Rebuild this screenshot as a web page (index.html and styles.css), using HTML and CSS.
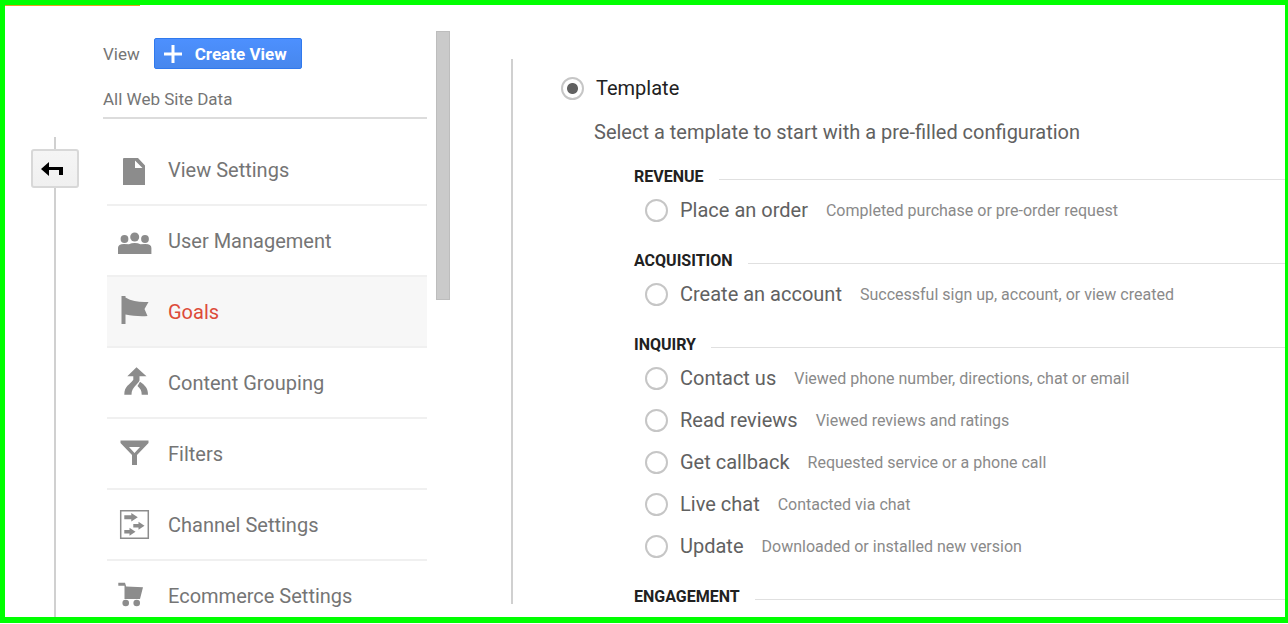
FILE: index.html
```html
<!DOCTYPE html>
<html lang="en">
<head>
  <meta charset="UTF-8">
  <title>Goals</title>
  <meta name="viewport" content="width=device-width, initial-scale=1" />
  <link rel="stylesheet" href="styles.css">
</head>
<body>

  <div class="frame">

    <div class="rail">
      <button class="back" type="button" aria-label="Back">
        <svg width="24" height="16" viewBox="0 0 24 16"><path d="M0 8l8-7v5h14v8h-4V9H8v6z" /></svg>
      </button>
    </div>

    <aside class="views">
      <div class="views-head">
        <span>View</span>
        <button class="create" type="button">
          <svg width="18" height="18" viewBox="0 0 18 18"><path d="M7.500 0h3v7.500h7.500v3h-7.500V18h-3v-7.500H0v-3h7.500z" /></svg>
          Create View
        </button>
      </div>
      <div class="property">All Web Site Data</div>

      <nav class="menu">
        <a href="#">
          <svg class="icon" viewBox="0 0 36 36"><path fill-rule="evenodd" d="M8 6h14l7 7.500V33H7V7q0-1 1-1zM19 8.500V16h7.500z" /></svg>
          View Settings
        </a>
        <a href="#">
          <svg class="icon" viewBox="0 0 36 36">
            <circle cx="18.700" cy="14" r="4.500" /><circle cx="8.500" cy="16" r="3.900" /><circle cx="29" cy="16" r="3.900" />
            <path d="M2 31v-6q0-4 6-4 3 0 5 .3 2.500-1.300 5.700-1.300t5.700 1.300q2-.3 5-.3 6 0 6 4v6z" />
          </svg>
          User Management
        </a>
        <a href="#" class="active">
          <svg class="icon" viewBox="0 0 36 36"><path d="M5.500 2h4v1.500c7 4 14 5 23 4.500l-4 7 3 7c-7 .5-15 0-22-1.500V30h-4z" /></svg>
          Goals
        </a>
        <a href="#">
          <svg class="icon" viewBox="0 0 36 36">
            <path d="M20.500 2.300l10 9h-7v4.200c-1.500 4-8 6.500-8 14.200H8.300c0-9 5.500-9.700 9-15v-3.400h-6z" />
            <path d="M24 16.800c5 3.700 8 6 8 12.900h-6.300c0-4-1.200-6-4.200-8.700z" />
          </svg>
          Content Grouping
        </a>
        <a href="#">
          <svg class="icon" viewBox="0 0 36 36"><path fill-rule="evenodd" d="M4.500 4.500h28V7L21 19v10h-5V19L4.500 7zM13 11l5.500 6 5.500-6z" /></svg>
          Filters
        </a>
        <a href="#">
          <svg class="icon" viewBox="0 0 36 36">
            <path fill="none" stroke="#8c8c8c" stroke-width="1.500" d="M4.700 3.700h27.600v27.600H4.700z" />
            <path d="M8.300 8.300h7V6l6.500 4.300-6.500 4.300v-2.300h-7zM17.300 17h5.200v-2.300l6 4-6 4v-2.300h-5.200zM8.300 23h5.200v-2.300l6 4-6 4v-2.300H8.300z" />
          </svg>
          Channel Settings
        </a>
        <a href="#">
          <svg class="icon" viewBox="0 0 36 36">
            <path d="M2.300 4.800H9l1.200 3.700L27 9.300 24 21H8.500V7.800H2.300z" />
            <circle cx="9.700" cy="25" r="3.300" /><circle cx="20.700" cy="25" r="3.300" />
          </svg>
          Ecommerce Settings
        </a>
      </nav>
    </aside>

    <div class="scroll-thumb"></div>

    <main class="goal">
      <label class="template"><input type="radio" name="type" checked> Template</label>
      <p>Select a template to start with a pre-filled configuration</p>

      <section>
        <h3>REVENUE</h3>
        <label><input type="radio" name="goal"> Place an order <small>Completed purchase or pre-order request</small></label>
      </section>

      <section>
        <h3>ACQUISITION</h3>
        <label><input type="radio" name="goal"> Create an account <small>Successful sign up, account, or view created</small></label>
      </section>

      <section>
        <h3>INQUIRY</h3>
        <label><input type="radio" name="goal"> Contact us <small>Viewed phone number, directions, chat or email</small></label>
        <label><input type="radio" name="goal"> Read reviews <small>Viewed reviews and ratings</small></label>
        <label><input type="radio" name="goal"> Get callback <small>Requested service or a phone call</small></label>
        <label><input type="radio" name="goal"> Live chat <small>Contacted via chat</small></label>
        <label><input type="radio" name="goal"> Update <small>Downloaded or installed new version</small></label>
      </section>

      <section>
        <h3>ENGAGEMENT</h3>
      </section>
    </main>

  </div>

</body>
</html>
```

FILE: styles.css
```css
body {
  margin: 0;
  background-color: #fff;
  font-family: Roboto, "Liberation Sans", sans-serif;
  color: #757575;
}
*, *:before, *:after {
  box-sizing: border-box;
}

.frame {
  position: relative;
  display: flex;
  height: calc(100vh - 1px);
  border: 5px solid #00ff00;
  border-right-width: 3px;
  border-bottom-width: 6px;
  overflow: hidden;
}
.frame:before {
  content: '';
  position: absolute;
  top: 0;
  left: 0;
  width: 135px;
  height: 1px;
  background-color: #e8a020;
}

/* left rail with the back button */
.rail {
  flex: none;
  display: flex;
  flex-direction: column;
  align-items: center;
  width: 48px;
  margin: 132px 24px 0 26px;
}
.rail:before, .rail:after {
  content: '';
  width: 2px;
  height: 12px;
  background-color: #d0d0d0;
}
.rail:after {
  flex: 1;
}
.back {
  display: flex;
  align-items: center;
  justify-content: center;
  width: 48px;
  height: 39px;
  padding: 0 4px 0 0;
  border: 2px solid #d8d8d8;
  border-radius: 3px;
  background: linear-gradient(#f5f5f5, #f0f0f0);
}

/* view column */
.views {
  flex: none;
  width: 324px;
  padding-top: 33px;
  font-size: 17px;
}
.views-head {
  display: flex;
  align-items: center;
  gap: 14px;
}
.create {
  display: flex;
  align-items: center;
  gap: 13px;
  height: 31px;
  padding: 0 14px 0 9px;
  border: 1px solid #3079ed;
  border-radius: 2px;
  background: linear-gradient(#4d90fe, #4787ed);
  color: #fff;
  font-family: inherit;
  font-size: 17px;
  font-weight: bold;
}
.create svg {
  fill: #fff;
}
.property {
  height: 50px;
  padding-top: 20px;
  line-height: 20px;
  border-bottom: 2px solid #dcdcdc;
}
.menu {
  margin: 16px 0 0 4px;
}
.menu a {
  display: flex;
  align-items: center;
  gap: 16px;
  height: 71px;
  padding-left: 9px;
  border-bottom: 2px solid #f0f0f0;
  color: #757575;
  font-size: 20px;
  text-decoration: none;
}
.menu .active {
  background-color: #f7f7f7;
  color: #dd4b39;
}
.icon {
  width: 36px;
  height: 36px;
  fill: #8c8c8c;
}

.scroll-thumb {
  flex: none;
  width: 14px;
  height: 269px;
  margin: 26px 61px 0 9px;
  border: 1px solid #bdbdbd;
  background-color: #cacaca;
}

/* goal templates */
.goal {
  flex: 1;
  align-self: flex-start;
  height: 545px;
  margin-top: 54px;
  padding: 8px 0 0 48px;
  border-left: 2px solid #d0d0d0;
  color: #616161;
  font-size: 20px;
  white-space: nowrap;
}
.goal label {
  display: flex;
  align-items: center;
  height: 42px;
}
.goal .template {
  color: #212121;
}
.goal p {
  margin: 0 0 8px 33px;
  line-height: 46px;
}
.goal input {
  appearance: none;
  flex: none;
  width: 23px;
  height: 23px;
  margin: 0 12px 0 0;
  border: 2px solid #c6c6c6;
  border-radius: 50%;
}
.goal input:checked {
  background: radial-gradient(circle, #616161 5px, transparent 6px);
}
.goal section {
  margin: 0 0 16px 73px;
}
.goal section label {
  padding-left: 11px;
}
.goal h3 {
  display: flex;
  align-items: center;
  gap: 15px;
  height: 26px;
  margin: 0;
  color: #212121;
  font-size: 16px;
  font-weight: bold;
}
.goal h3:after {
  content: '';
  flex: 1;
  height: 1px;
  margin-top: 6px;
  background-color: #e0e0e0;
}
.goal small {
  margin-left: 18px;
  color: #8a8a8a;
  font-size: 16px;
}
```
